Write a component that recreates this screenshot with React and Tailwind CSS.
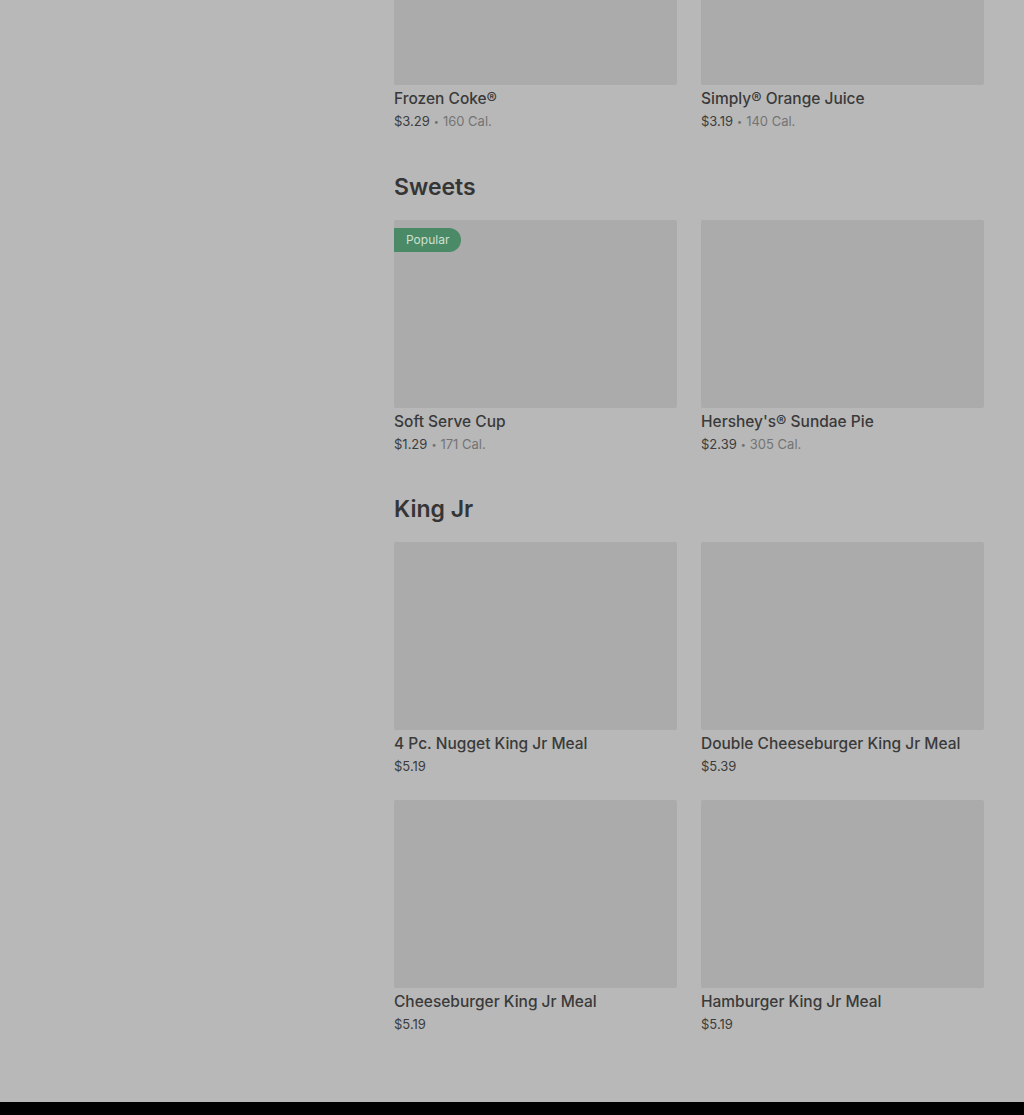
const sections = [
  {
    title: null,
    items: [
      { name: "Frozen Coke®", price: "$3.29", cal: "160 Cal." },
      { name: "Simply® Orange Juice", price: "$3.19", cal: "140 Cal." },
    ],
  },
  {
    title: "Sweets",
    items: [
      { name: "Soft Serve Cup", price: "$1.29", cal: "171 Cal.", popular: true },
      { name: "Hershey's® Sundae Pie", price: "$2.39", cal: "305 Cal." },
    ],
  },
  {
    title: "King Jr",
    items: [
      { name: "4 Pc. Nugget King Jr Meal", price: "$5.19" },
      { name: "Double Cheeseburger King Jr Meal", price: "$5.39" },
      { name: "Cheeseburger King Jr Meal", price: "$5.19" },
      { name: "Hamburger King Jr Meal", price: "$5.19" },
    ],
  },
];

const MenuCard = ({ item }) => (
  <div className="flex flex-col">
    <div className="relative h-[188px] rounded-[2px] bg-[#ababab]">
      {item.popular && (
        <span className="absolute left-0 top-2 h-6 px-3 flex items-center rounded-r-full bg-[#4a8a66] text-[12px] text-[#cfe0d4]">
          Popular
        </span>
      )}
    </div>
    <p className="mt-[2px] text-[15.5px] leading-6 font-medium text-[#3a3a3a]">
      {item.name}
    </p>
    <div className="mt-px h-5 flex items-center gap-1 text-[13px] text-[#3c3c3c]">
      <span>{item.price}</span>
      {item.cal && (
        <>
          <span className="text-[9px] text-[#707070]">•</span>
          <span className="text-[#747474]">{item.cal}</span>
        </>
      )}
    </div>
  </div>
);

export default function App() {
  return (
    <div className="min-h-[1115px] bg-[#b8b8b8] flex flex-col font-['Inter',sans-serif]">
      <div className="flex flex-1">
        {/* empty side column */}
        <aside className="w-[394px] shrink-0" />

        <main className="w-[590px] mt-[-103px] pb-[67px]">
          {sections.map((s, i) => (
            <section key={i} className={i === 1 ? "mt-[39px]" : i > 1 ? "mt-[38px]" : ""}>
              {s.title && (
                <h2 className="mb-[17px] text-[23px] leading-8 font-semibold text-[#353535]">
                  {s.title}
                </h2>
              )}
              <div className="grid grid-cols-2 gap-x-6 gap-y-[23px]">
                {s.items.map((item) => (
                  <MenuCard key={item.name} item={item} />
                ))}
              </div>
            </section>
          ))}
        </main>
      </div>

      <footer className="h-[13px] bg-black" />
    </div>
  );
}
